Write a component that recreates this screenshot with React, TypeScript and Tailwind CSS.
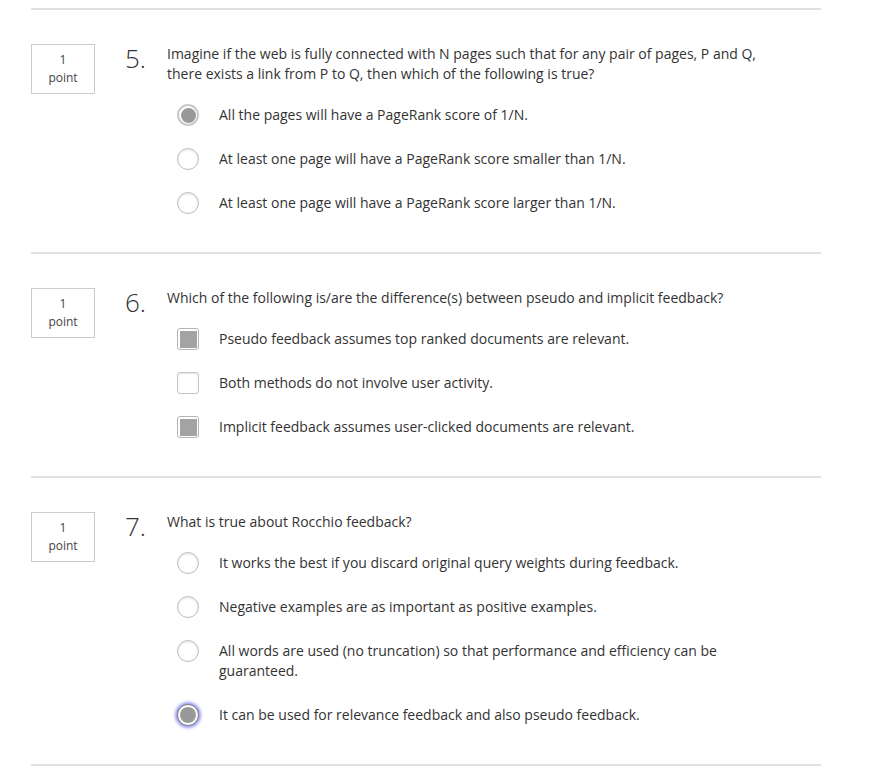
import React from "react";

type Opt = { text: React.ReactNode; checked?: boolean; focused?: boolean };
type Q = { n: number; kind: "radio" | "check"; question: React.ReactNode; options: Opt[] };

const questions: Q[] = [
  {
    n: 5,
    kind: "radio",
    question: (
      <>
        Imagine if the web is fully connected with N pages such that for any pair of pages, P and Q,
        <br />
        there exists a link from P to Q, then which of the following is true?
      </>
    ),
    options: [
      { text: "All the pages will have a PageRank score of 1/N.", checked: true },
      { text: "At least one page will have a PageRank score smaller than 1/N." },
      { text: "At least one page will have a PageRank score larger than 1/N." },
    ],
  },
  {
    n: 6,
    kind: "check",
    question: "Which of the following is/are the difference(s) between pseudo and implicit feedback?",
    options: [
      { text: "Pseudo feedback assumes top ranked documents are relevant.", checked: true },
      { text: "Both methods do not involve user activity." },
      { text: "Implicit feedback assumes user-clicked documents are relevant.", checked: true },
    ],
  },
  {
    n: 7,
    kind: "radio",
    question: "What is true about Rocchio feedback?",
    options: [
      { text: "It works the best if you discard original query weights during feedback." },
      { text: "Negative examples are as important as positive examples." },
      {
        text: (
          <>
            All words are used (no truncation) so that performance and efficiency can be
            <br />
            guaranteed.
          </>
        ),
      },
      { text: "It can be used for relevance feedback and also pseudo feedback.", checked: true, focused: true },
    ],
  },
];

function Radio({ checked, focused }: { checked?: boolean; focused?: boolean }) {
  if (checked && focused) {
    return (
      <div className="w-[22px] h-[22px] shrink-0 rounded-full border border-[#7a7a7a] bg-white flex items-center justify-center shadow-[0_0_3px_2px_#9d9df2]">
        <div className="w-[16px] h-[16px] rounded-full bg-[#999999]" />
      </div>
    );
  }
  if (checked) {
    return (
      <div className="w-[22px] h-[22px] shrink-0 rounded-full border-2 border-[#c8c8c8] bg-white flex items-center justify-center">
        <div className="w-[15px] h-[15px] rounded-full bg-[#999999]" />
      </div>
    );
  }
  return (
    <div className="w-[22px] h-[22px] shrink-0 rounded-full border border-[#bdbdbd] bg-white shadow-[inset_0_1px_2px_rgba(0,0,0,0.12)]" />
  );
}

function Check({ checked }: { checked?: boolean }) {
  if (checked) {
    return (
      <div className="w-[22px] h-[22px] shrink-0 rounded-[3px] border border-[#b5b5b5] bg-white flex items-center justify-center">
        <div className="w-[17px] h-[17px] bg-[#a3a3a3]" />
      </div>
    );
  }
  return (
    <div className="w-[22px] h-[22px] shrink-0 rounded-[3px] border border-[#c4c4c4] bg-white shadow-[inset_0_1px_2px_rgba(0,0,0,0.1)]" />
  );
}

function Question({ q }: { q: Q }) {
  return (
    <div className="border-t-2 border-[#e0e0e0] pt-[34px] pb-[27px] flex">
      <div className="w-[64px] h-[50px] border border-[#cccccc] flex flex-col items-center justify-center text-[12px] leading-[18px] text-[#444]">
        <span>1</span>
        <span>point</span>
      </div>
      <div className="ml-[30px] flex-1">
        <div className="flex">
          <div className="w-[42px] h-[20px] text-[26px] leading-[26px] font-light text-[#333] pt-[1px] overflow-visible">{q.n}.</div>
          <div className="text-[14px] leading-[20px] text-[#333]">{q.question}</div>
        </div>
        <div className="mt-[9px] ml-[52px]">
          {q.options.map((o, i) => (
            <div key={i} className="flex items-start py-[12px]">
              <div className="w-[22px] h-[20px] flex items-center shrink-0">
                {q.kind === "radio" ? <Radio checked={o.checked} focused={o.focused} /> : <Check checked={o.checked} />}
              </div>
              <div className="ml-[20px] text-[14px] leading-[20px] text-[#333]">{o.text}</div>
            </div>
          ))}
        </div>
      </div>
    </div>
  );
}

export default function App() {
  return (
    <div
      className="w-[871px] h-[771px] bg-white overflow-hidden"
      style={{ fontFamily: '"Open Sans", "Noto Sans", sans-serif' }}
    >
      <div className="ml-[31px] w-[790px] pt-[8px]">
        {questions.map((q) => (
          <Question key={q.n} q={q} />
        ))}
        <div className="border-t-2 border-[#e0e0e0]" />
      </div>
    </div>
  );
}
